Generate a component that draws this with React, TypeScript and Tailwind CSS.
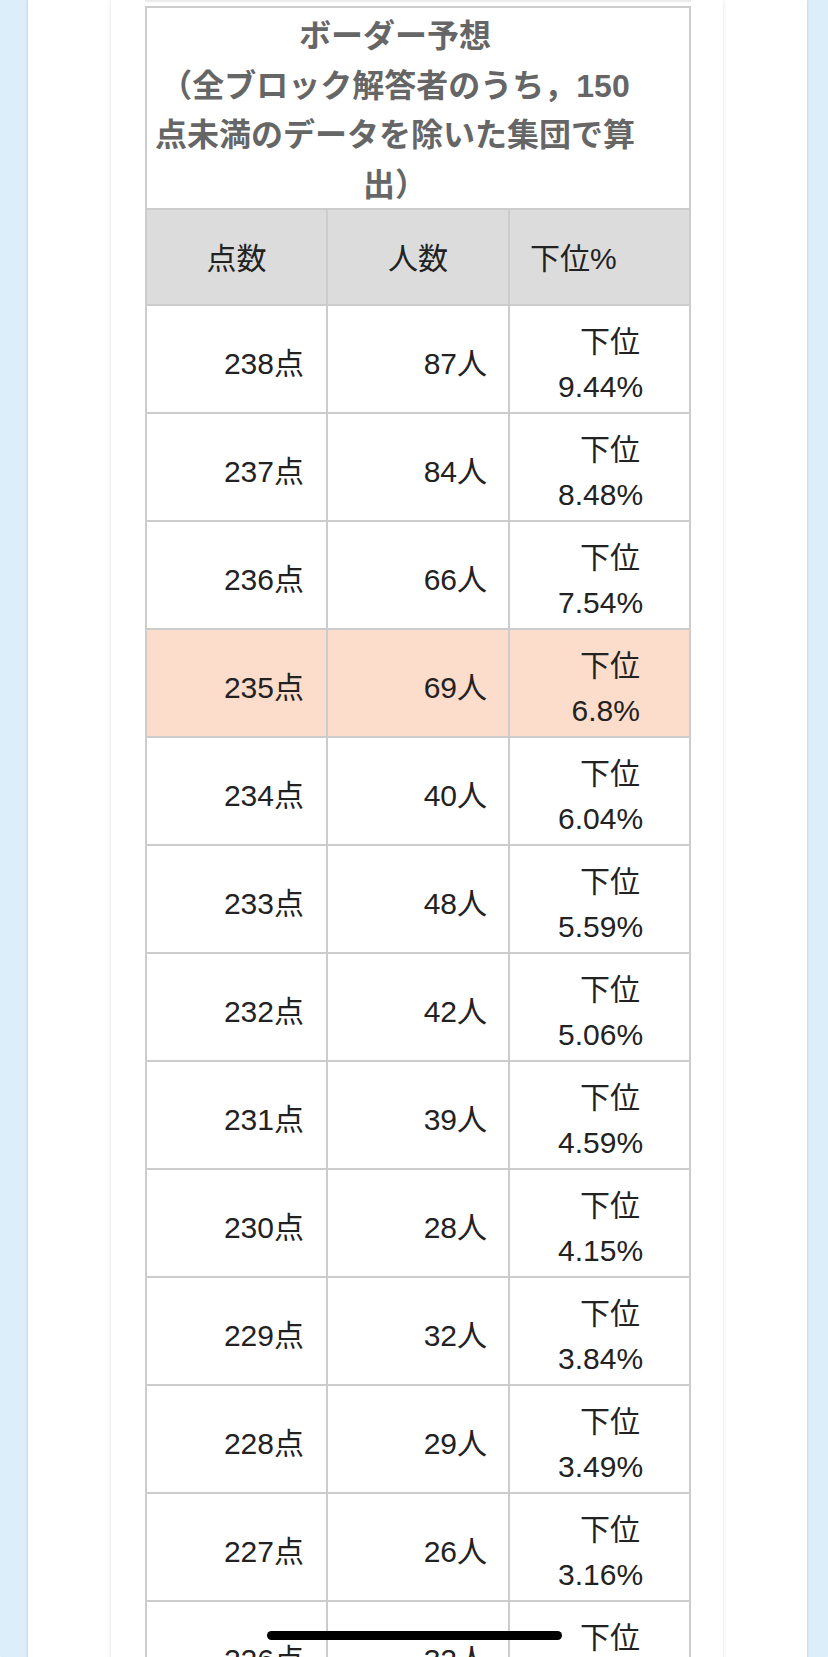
import React from "react";

type Row = { score: string; count: string; pct: string; hl?: boolean };

const rows: Row[] = [
  { score: "238", count: "87", pct: "9.44" },
  { score: "237", count: "84", pct: "8.48" },
  { score: "236", count: "66", pct: "7.54" },
  { score: "235", count: "69", pct: "6.8", hl: true },
  { score: "234", count: "40", pct: "6.04" },
  { score: "233", count: "48", pct: "5.59" },
  { score: "232", count: "42", pct: "5.06" },
  { score: "231", count: "39", pct: "4.59" },
  { score: "230", count: "28", pct: "4.15" },
  { score: "229", count: "32", pct: "3.84" },
  { score: "228", count: "29", pct: "3.49" },
  { score: "227", count: "26", pct: "3.16" },
  { score: "226", count: "32", pct: "2.87" },
];

const font = { fontFamily: '"Liberation Sans", "Noto Sans CJK JP", sans-serif' };

export default function App() {
  return (
    <div className="relative h-[1657px] overflow-hidden bg-white" style={font}>
      <div className="h-[1668px] rounded-b-[14px] bg-[#dceef9] pl-[28px] pr-[21px]">
        <div className="h-full bg-white pl-[83px] pr-[84px] shadow-[0_0_3px_rgba(0,0,0,0.18)]">
          <div className="h-full bg-white pl-[34px] pr-[32px] shadow-[0_0_4px_rgba(0,0,0,0.13)]">
            <div className="h-[2px] bg-[#ebebeb]" />
            <div className="mt-[4px] grid w-[546px] grid-cols-[181px_182px_181px] border-l-2 border-t-2 border-[#cccccc]">
              <div className="col-span-3 h-[202px] overflow-hidden border-b-2 border-r-2 border-[#cccccc] bg-white pl-[3px] pr-[49px] pt-[4px] text-center text-[32px] font-bold leading-[49.5px] text-[#666666]">
                ボーダー予想
                <br />
                （全ブロック解答者のうち，150点未満のデータを除いた集団で算出）
              </div>

              <div className="flex h-[96px] items-center justify-center border-b-2 border-r-2 border-[#cccccc] bg-[#dcdcdc] pt-[2px] text-[30px] text-[#222222]">
                点数
              </div>
              <div className="flex h-[96px] items-center justify-center border-b-2 border-r-2 border-[#cccccc] bg-[#dcdcdc] pt-[2px] text-[30px] text-[#222222]">
                人数
              </div>
              <div className="flex h-[96px] items-center justify-start border-b-2 border-r-2 border-[#cccccc] bg-[#dcdcdc] pl-[20px] pt-[2px] text-[30px] text-[#222222]">
                下位%
              </div>

              {rows.map((r) => {
                const bg = r.hl ? "bg-[#fcdcca]" : "bg-white";
                return (
                  <React.Fragment key={r.score}>
                    <div
                      className={`flex h-[108px] items-center justify-end border-b-2 border-r-2 border-[#cccccc] pr-[22px] pt-[8px] text-[30px] text-[#222222] ${bg}`}
                    >
                      {r.score}点
                    </div>
                    <div
                      className={`flex h-[108px] items-center justify-end border-b-2 border-r-2 border-[#cccccc] pr-[21px] pt-[8px] text-[30px] text-[#222222] ${bg}`}
                    >
                      {r.count}人
                    </div>
                    <div
                      className={`flex h-[108px] flex-col justify-center border-b-2 border-r-2 border-[#cccccc] pl-[48px] pr-[49px] pt-[10px] text-right text-[30px] leading-[45px] text-[#222222] ${bg}`}
                    >
                      <div className="whitespace-nowrap">下位</div>
                      <div className="whitespace-nowrap">{r.pct}%</div>
                    </div>
                  </React.Fragment>
                );
              })}
            </div>
          </div>
        </div>
      </div>
      <div className="absolute left-[267px] top-[1631px] h-[9px] w-[295px] rounded-full bg-black" />
    </div>
  );
}
